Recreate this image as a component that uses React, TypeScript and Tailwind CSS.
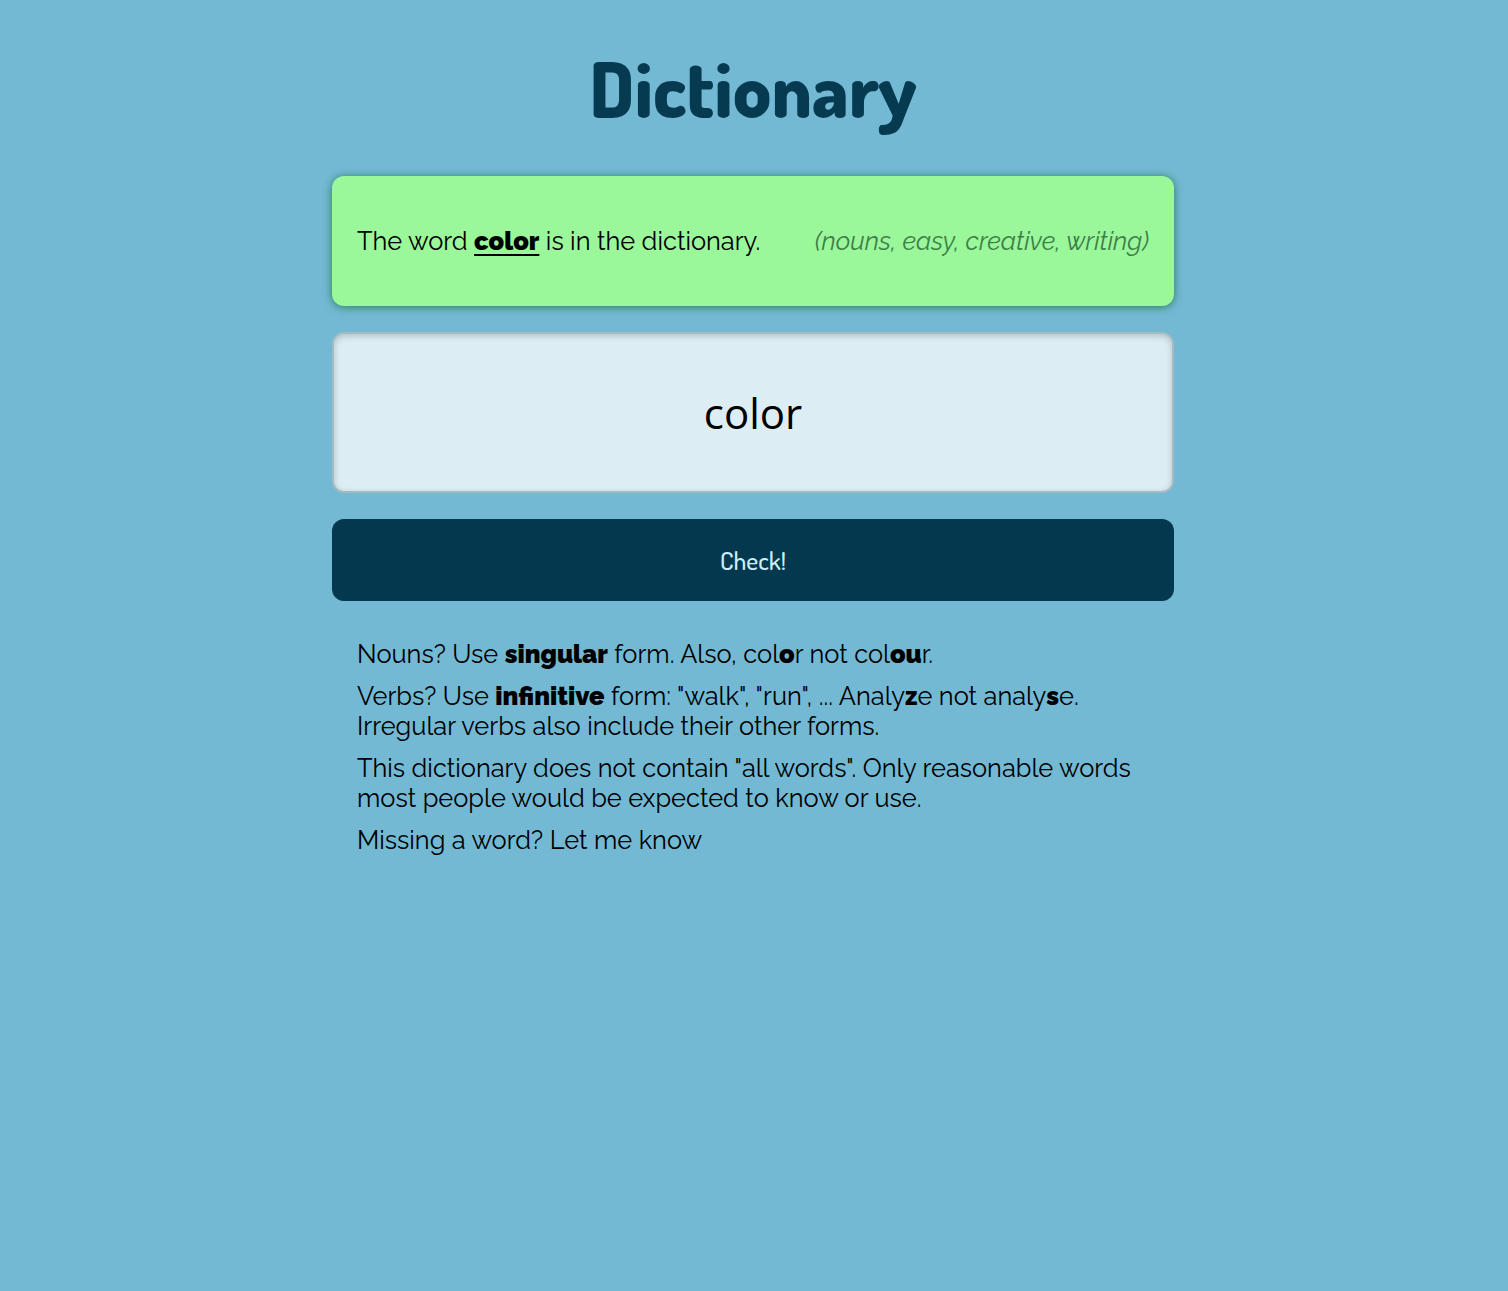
import React, { useState } from "react";

const bodyFont = "font-['Raleway','Lato','Noto_Sans',sans-serif]";
const headFont =
  "font-['Dosis','DejaVu_Sans_Condensed','DejaVu_Sans',sans-serif]";

export default function App() {
  const [word, setWord] = useState("color");

  return (
    <main className="min-h-[1291px] w-full bg-[#73b9d4] pr-[2px] pb-24">
      <section className="mx-auto flex w-[842px] flex-col">
        <h1
          className={`pt-[40px] pb-[40px] text-center text-[76px] font-extrabold leading-[96px] text-[#053a50] ${headFont}`}
        >
          Dictionary
        </h1>

        <div
          className={`flex h-[130px] items-center justify-between rounded-xl bg-[#9af79a] px-[25px] text-[25.4px] text-black shadow-[0_1px_8px_rgba(20,110,60,0.8)] ${bodyFont}`}
        >
          <span>
            The word{" "}
            <b className="font-black underline underline-offset-4">color</b> is
            in the dictionary.
          </span>
          <span className="italic text-[#3d7f48]">
            (nouns, easy, creative, writing)
          </span>
        </div>

        <input
          value={word}
          onChange={(e) => setWord(e.target.value)}
          className="mt-[26px] h-[161px] w-full rounded-xl border-2 border-[#a3bcc4] bg-[#dcedf3] text-center font-['Open_Sans',sans-serif] text-[42px] text-black shadow-[inset_0_2px_6px_rgba(0,0,0,0.2)] outline-none"
        />

        <button
          type="button"
          className={`mt-[26px] h-[82px] w-full rounded-xl bg-[#04384f] text-[25.5px] font-medium text-[#cdeefa] ${headFont}`}
        >
          Check!
        </button>

        <div
          className={`flex flex-col gap-3 px-[25px] pt-[38px] text-[25.4px] leading-[30px] text-black ${bodyFont}`}
        >
          <p>
            Nouns? Use <b className="font-black">singular</b> form. Also, col
            <b className="font-black">o</b>r not col
            <b className="font-black">ou</b>r.
          </p>
          <p>
            Verbs? Use <b className="font-black">infinitive</b> form: "walk",
            "run", ... Analy<b className="font-black">z</b>e not analy
            <b className="font-black">s</b>e. Irregular verbs also include their
            other forms.
          </p>
          <p>
            This dictionary does not contain "all words". Only reasonable words
            most people would be expected to know or use.
          </p>
          <p>Missing a word? Let me know</p>
        </div>
      </section>
    </main>
  );
}
